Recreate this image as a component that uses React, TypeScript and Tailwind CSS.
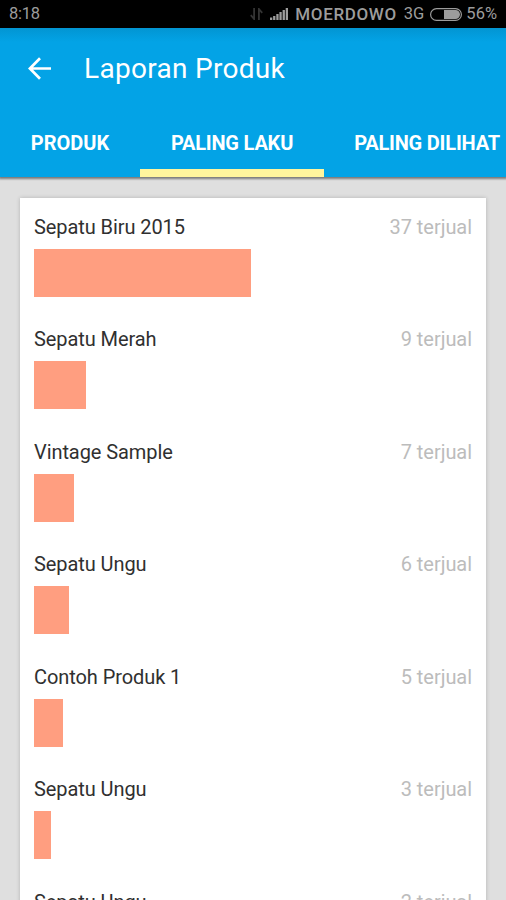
import { clsx } from "clsx"

type Product = {
  id: number
  name: string
  sold: number
  barWidth: number
}

const PRODUCTS: Product[] = [
  { id: 1, name: "Sepatu Biru 2015", sold: 37, barWidth: 217 },
  { id: 2, name: "Sepatu Merah", sold: 9, barWidth: 52 },
  { id: 3, name: "Vintage Sample", sold: 7, barWidth: 40.4 },
  { id: 4, name: "Sepatu Ungu", sold: 6, barWidth: 35 },
  { id: 5, name: "Contoh Produk 1", sold: 5, barWidth: 29 },
  { id: 6, name: "Sepatu Ungu", sold: 3, barWidth: 17 },
  { id: 7, name: "Sepatu Ungu", sold: 2, barWidth: 11.5 },
]

const TABS = [
  { label: "PRODUK", className: "w-[140px]" },
  { label: "PALING LAKU", className: "w-[184px] tracking-[-0.2px]" },
  { label: "PALING DILIHAT", className: "w-[206px] tracking-[-0.2px]" },
]

function StatusBar() {
  return (
    <div className="flex h-7 shrink-0 items-center bg-black pr-[9px] pl-[9px] text-[16.5px] leading-7 text-[#9c9c9c]">
      <span className="tracking-[-0.3px]">8:18</span>
      <svg className="ml-auto" width="13" height="12" viewBox="0 0 13 12" fill="none" stroke="#343434" strokeWidth="1.8">
        <path d="M4.1 0v11L0.8 7.2M8.9 12V1l3.3 3.8" />
      </svg>
      <svg className="ml-[7px]" width="18" height="12" viewBox="0 0 18 12" fill="#9c9c9c">
        <path d="M0 9.5h2.3V12H0zM3.1 8h2.3v4H3.1zM6.3 6h2.3v6H6.3zM9.4 4h2.3v8H9.4zM12.6 2h2.3v10h-2.3zM15.7 0H18v12h-2.3z" />
      </svg>
      <span className="ml-[7px] text-[17px] font-medium tracking-[0.65px]">MOERDOWO</span>
      <span className="ml-[7px]">3G</span>
      <svg className="ml-[6px]" width="32" height="13" viewBox="0 0 32 13">
        <rect x="0.6" y="0.6" width="30.8" height="11.8" rx="5.9" fill="none" stroke="#9c9c9c" strokeWidth="1.2" />
        <path d="M14 2h11.5a4.5 4.5 0 0 1 0 9H14z" fill="#9c9c9c" />
      </svg>
      <span className="ml-1">56%</span>
    </div>
  )
}

function Header({ activeTab }: { activeTab: string }) {
  return (
    <header className="relative z-10 h-[149px] shrink-0 bg-[#03a3e6] bg-linear-to-b from-[#0295d2] to-[#03a3e6] to-[14px] text-white shadow-[0_1px_2px_1px_rgba(0,0,0,0.45)]">
      <div className="flex h-[81px] items-center pl-7">
        <svg width="24" height="24" viewBox="0 0 24 24" fill="none" stroke="currentColor" strokeWidth="2.7">
          <path d="M23 11.5H2.5M12 1.2L1.9 11.5L12 21.8" />
        </svg>
        <h1 className="ml-8 text-[28px] leading-8 tracking-[0.3px]">Laporan Produk</h1>
      </div>
      <nav className="flex h-[68px] overflow-hidden">
        {TABS.map((tab) => (
          <button
            key={tab.label}
            className={clsx(
              "shrink-0 border-b-8 pt-2 text-center text-xl font-bold whitespace-nowrap",
              tab.className,
              tab.label === activeTab ? "border-[#fff59d]" : "border-transparent"
            )}
          >
            {tab.label}
          </button>
        ))}
      </nav>
    </header>
  )
}

function ProductRow({ product }: { product: Product }) {
  return (
    <li className="h-[112.5px]">
      <div className="flex justify-between text-xl leading-6">
        <span className="tracking-[-0.08px] text-[#303030]">{product.name}</span>
        <span className="tracking-[-0.05px] text-[#bcbcbc]">{product.sold} terjual</span>
      </div>
      <div className="mt-[10px] h-[47.7px] bg-[#ff9e80]" style={{ width: product.barWidth }} />
    </li>
  )
}

export default function App() {
  return (
    <div className="flex h-[900px] w-[506px] flex-col overflow-hidden bg-[#dfdfdf] font-[Roboto,sans-serif]">
      <StatusBar />
      <Header activeTab="PALING LAKU" />
      <main className="flex-1 overflow-hidden px-5 pt-[21px]">
        <ul className="bg-white px-[14px] pt-[16.9px] shadow-[0_0_4px_rgba(0,0,0,0.2)]">
          {PRODUCTS.map((product) => (
            <ProductRow key={product.id} product={product} />
          ))}
        </ul>
      </main>
    </div>
  )
}
